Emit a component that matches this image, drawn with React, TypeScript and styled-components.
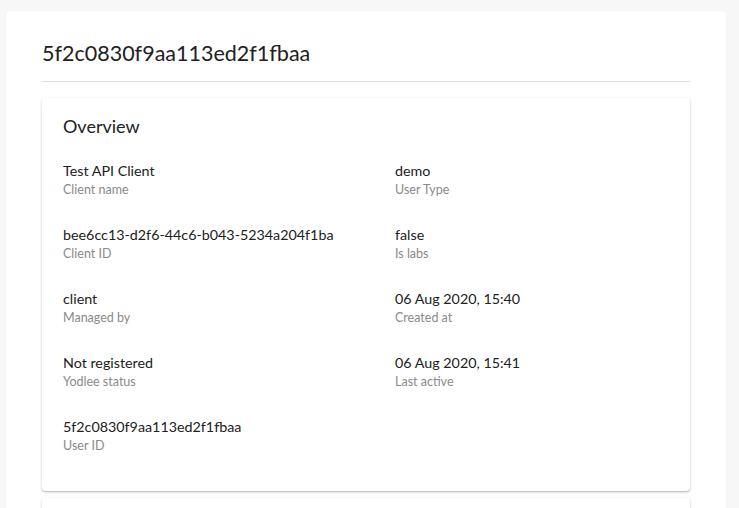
import React from 'react';
import styled, { createGlobalStyle } from 'styled-components';

interface Field {
  value: string;
  label: string;
}

const fields: Field[] = [
  { value: 'Test API Client', label: 'Client name' },
  { value: 'demo', label: 'User Type' },
  { value: 'bee6cc13-d2f6-44c6-b043-5234a204f1ba', label: 'Client ID' },
  { value: 'false', label: 'Is labs' },
  { value: 'client', label: 'Managed by' },
  { value: '06 Aug 2020, 15:40', label: 'Created at' },
  { value: 'Not registered', label: 'Yodlee status' },
  { value: '06 Aug 2020, 15:41', label: 'Last active' },
  { value: '5f2c0830f9aa113ed2f1fbaa', label: 'User ID' },
];

const GlobalStyle = createGlobalStyle`
  html, body {
    margin: 0;
    padding: 0;
    background: #f7f7f7;
    font-family: Lato, 'Noto Sans', sans-serif;
    color: #222;
  }
`;

const App: React.FC = () => {
  return (
    <>
      <GlobalStyle />
      <Page>
        <Card>
          <Header>
            <Title>5f2c0830f9aa113ed2f1fbaa</Title>
          </Header>
          <Section>
            <SectionTitle>Overview</SectionTitle>
            <Grid>
              {fields.map((field) => (
                <Item key={field.label}>
                  <Value>{field.value}</Value>
                  <Label>{field.label}</Label>
                </Item>
              ))}
            </Grid>
          </Section>
          <Section />
        </Card>
      </Page>
    </>
  );
};

export default App;

const Page = styled.div`
  padding: 11px 13px 0 6px;
  box-sizing: border-box;
  overflow: hidden;
  height: 508px;
`;

const Card = styled.div`
  background: #fff;
  border-radius: 4px;
  padding: 0 36px 20px;
  box-shadow: 0 0 2px rgba(0, 0, 0, 0.06);
  display: flex;
  flex-direction: column;
  gap: 7px;
`;

const Header = styled.div`
  border-bottom: 1px solid #e0e0e0;
  padding: 29px 0 15px;
  margin-bottom: 9px;
`;

const Title = styled.h1`
  margin: 0;
  font-size: 21.5px;
  font-weight: 400;
  line-height: 26px;
  color: #212121;
`;

const Section = styled.div`
  background: #fff;
  border-radius: 4px;
  min-height: 80px;
  padding: 18px 21px 36px;
  box-shadow: 0 1px 3px rgba(0, 0, 0, 0.2), 0 1px 1px rgba(0, 0, 0, 0.12);
`;

const SectionTitle = styled.h2`
  margin: 0 0 26px;
  font-size: 18px;
  font-weight: 400;
  line-height: 20px;
  color: #212121;
`;

const Grid = styled.div`
  display: grid;
  grid-template-columns: 332px 1fr;
  row-gap: 27px;
`;

const Item = styled.div`
  display: flex;
  flex-direction: column;
`;

const Value = styled.span`
  font-size: 14.3px;
  line-height: 18px;
  color: #212121;
`;

const Label = styled.span`
  font-size: 12.5px;
  line-height: 19px;
  color: #8a8a8a;
`;
